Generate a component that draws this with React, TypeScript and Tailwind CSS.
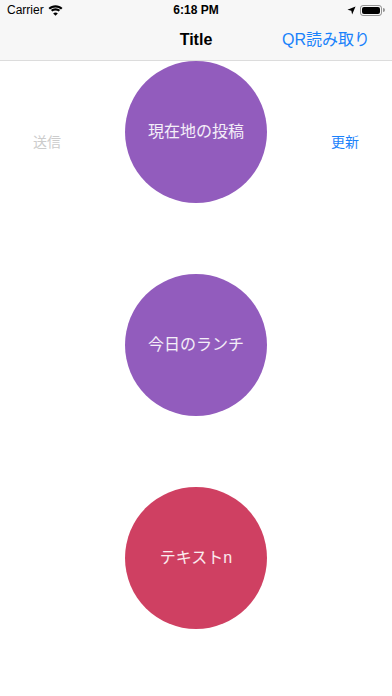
import React from 'react';

const jp = '"Liberation Sans", "Noto Sans CJK JP", sans-serif';

const Circle: React.FC<{ label: string; color: string }> = ({ label, color }) => (
  <div
    className={`flex h-[142px] w-[142px] items-center justify-center rounded-full ${color}`}
  >
    <span className="text-[16px] text-white/90">{label}</span>
  </div>
);

const StatusBar: React.FC = () => (
  <div className="flex h-[20px] items-center justify-between px-[7px] text-[12px]">
    <div className="flex w-[110px] items-center gap-[4px]">
      <span className="text-black">Carrier</span>
      <svg width="15" height="11" viewBox="0 0 15 11">
        <path d="M7.5 2.4c2.1 0 4 .8 5.5 2.1l1.5-1.5C12.6 1.2 10.2.2 7.5.2S2.4 1.2.5 3l1.5 1.5c1.5-1.3 3.4-2.1 5.5-2.1z" fill="#000" />
        <path d="M7.5 5.5c1.2 0 2.3.4 3.1 1.1l1.5-1.5C10.9 4 9.3 3.3 7.5 3.3S4.1 4 2.9 5.1l1.5 1.5c.8-.7 1.9-1.1 3.1-1.1z" fill="#000" />
        <path d="M7.5 10.8l2.3-2.3c-.6-.5-1.4-.9-2.3-.9s-1.7.4-2.3.9z" fill="#000" />
      </svg>
    </div>
    <span className="font-bold text-black">6:18 PM</span>
    <div className="flex w-[110px] items-center justify-end gap-[4px]">
      <svg width="9" height="9" viewBox="0 0 10 10">
        <path d="M9.5.5L.5 4.3l4.3.9.9 4.3z" fill="#000" />
      </svg>
      <div className="flex items-center">
        <div className="flex h-[11px] w-[22px] items-center rounded-[3px] border border-black/40 p-[1px]">
          <div className="h-full w-full rounded-[2px] bg-black" />
        </div>
        <div className="ml-[1px] h-[4px] w-[1.5px] rounded-r bg-black/40" />
      </div>
    </div>
  </div>
);

export default function App() {
  return (
    <div className="h-[696px] w-[392px] overflow-hidden bg-white" style={{ fontFamily: jp }}>
      <div className="border-b border-[#dcdcdc] bg-[#f7f7f7]">
        <StatusBar />
        <div className="grid h-[40px] grid-cols-[1fr_auto_1fr] items-center px-[22px]">
          <span />
          <span className="text-[16px] font-bold text-black">Title</span>
          <button className="justify-self-end text-[16px] text-[#1a82fb]">QR読み取り</button>
        </div>
      </div>

      <div className="flex flex-col items-center">
        <div className="flex w-full items-start justify-between px-[33px]">
          <button className="mt-[71px] w-[28px] text-[14px] text-[#cccccc]">送信</button>
          <Circle label="現在地の投稿" color="bg-[#925cbd]" />
          <button className="mt-[71px] w-[28px] text-[14px] text-[#1a82fb]">更新</button>
        </div>
        <div className="mt-[71px]">
          <Circle label="今日のランチ" color="bg-[#925cbd]" />
        </div>
        <div className="mt-[71px]">
          <Circle label="テキストn" color="bg-[#cf4062]" />
        </div>
      </div>
    </div>
  );
}
